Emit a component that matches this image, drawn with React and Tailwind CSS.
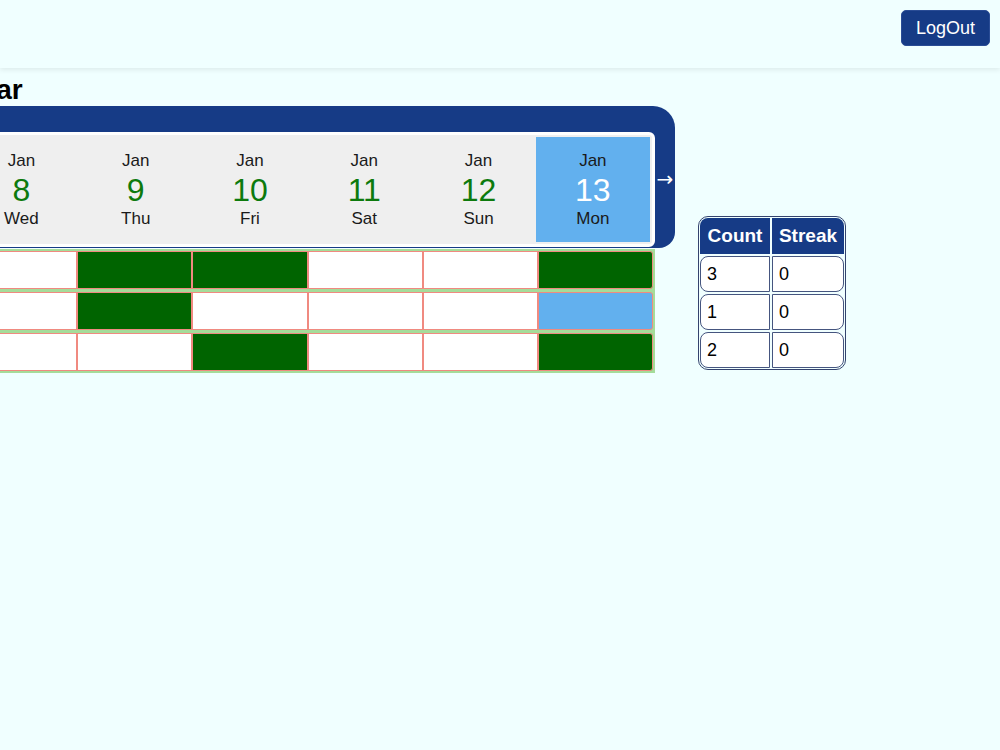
import React from "react";

const days = [
  { m: "Jan", d: 7, w: "Tue" },
  { m: "Jan", d: 8, w: "Wed" },
  { m: "Jan", d: 9, w: "Thu" },
  { m: "Jan", d: 10, w: "Fri" },
  { m: "Jan", d: 11, w: "Sat" },
  { m: "Jan", d: 12, w: "Sun" },
  { m: "Jan", d: 13, w: "Mon", today: true },
];

// 0 = empty, 1 = done, 2 = today pending
const habits = [
  { marks: [0, 0, 1, 1, 0, 0, 1], count: 3, streak: 0 },
  { marks: [0, 0, 1, 0, 0, 0, 2], count: 1, streak: 0 },
  { marks: [0, 0, 0, 1, 0, 0, 1], count: 2, streak: 0 },
];

function DayCell({ day }) {
  return (
    <div
      className={
        "h-[105px] flex flex-col items-center justify-center " +
        (day.today ? "bg-[#62b0ee]" : "")
      }
    >
      <div className="text-[17px] leading-[20px] text-[#1a1a1a]">{day.m}</div>
      <div
        className={
          "text-[32px] leading-[38px] " +
          (day.today ? "text-white" : "text-[#0d7a0d]")
        }
      >
        {day.d}
      </div>
      <div className="text-[17px] leading-[20px] text-[#1a1a1a]">{day.w}</div>
    </div>
  );
}

function MarkCell({ v, i }) {
  const bg = v === 1 ? "bg-[#006400]" : v === 2 ? "bg-[#62b0ee]" : "bg-white";
  const round = i === 0 ? "rounded-l-[3px]" : i === 6 ? "rounded-r-[3px]" : "";
  return <div className={"h-[38px] border border-[#f08a80] " + bg + " " + round} />;
}

export default function App() {
  return (
    <div
      className="min-h-screen bg-[#f0ffff] overflow-hidden text-black"
      style={{ fontFamily: '"Liberation Sans", Arial, sans-serif' }}
    >
      <header className="h-[68px] flex justify-end items-start pt-[10px] pr-[10px] shadow-[0_2px_5px_rgba(0,0,0,0.08)]">
        <button className="w-[89px] h-[36px] rounded-[5px] bg-[#163b86] text-white text-[18px] border border-[#2a4c95]">
          LogOut
        </button>
      </header>

      <main className="flex items-start -ml-[175px]">
        <section className="w-[850px] flex flex-col">
          <h2 className="mt-[6px] text-[28px] leading-[32px] font-bold">Habit Calendar</h2>

          <div className="bg-[#163b86] rounded-tr-[22px] rounded-br-[16px] rounded-l-[16px] pt-[26px] pb-[1px] flex items-center">
            <div
              className="w-[20px] flex justify-center text-white text-[20px] leading-[20px] mb-[22px]"
              style={{ fontFamily: '"DejaVu Sans", sans-serif' }}
            >
              ←
            </div>
            <div className="w-[810px] bg-[#efefef] border-[3px] border-white rounded-[6px] p-[2px] grid grid-cols-7">
              {days.map((d) => (
                <DayCell key={d.d} day={d} />
              ))}
            </div>
            <div
              className="w-[20px] flex justify-center text-white text-[20px] leading-[20px] mb-[22px]"
              style={{ fontFamily: '"DejaVu Sans", sans-serif' }}
            >
              →
            </div>
          </div>

          <div className="mx-[20px] mt-[1px] bg-[#a5dc9a] p-[2px] flex flex-col gap-[3px]">
            {habits.map((h, r) => (
              <div key={r} className="grid grid-cols-7">
                {h.marks.map((v, i) => (
                  <MarkCell key={i} v={v} i={i} />
                ))}
              </div>
            ))}
          </div>
        </section>

        <section className="ml-[23px] mt-[148px]">
          <div className="grid grid-cols-[70px_72px] gap-[2px] p-[1px] border border-[#34436e] rounded-[10px] text-[18px]">
            <div className="h-[36px] bg-[#163b86] rounded-tl-[8px] text-white font-bold text-[19px] flex items-center justify-center">
              Count
            </div>
            <div className="h-[36px] bg-[#163b86] rounded-tr-[8px] text-white font-bold text-[19px] flex items-center justify-center">
              Streak
            </div>
            {habits.map((h, r) => (
              <React.Fragment key={r}>
                <div className="h-[36px] bg-white border border-[#45557f] rounded-l-[8px] flex items-center pl-[6px]">
                  {h.count}
                </div>
                <div className="h-[36px] bg-white border border-[#45557f] rounded-r-[8px] flex items-center pl-[6px]">
                  {h.streak}
                </div>
              </React.Fragment>
            ))}
          </div>
        </section>
      </main>
    </div>
  );
}
